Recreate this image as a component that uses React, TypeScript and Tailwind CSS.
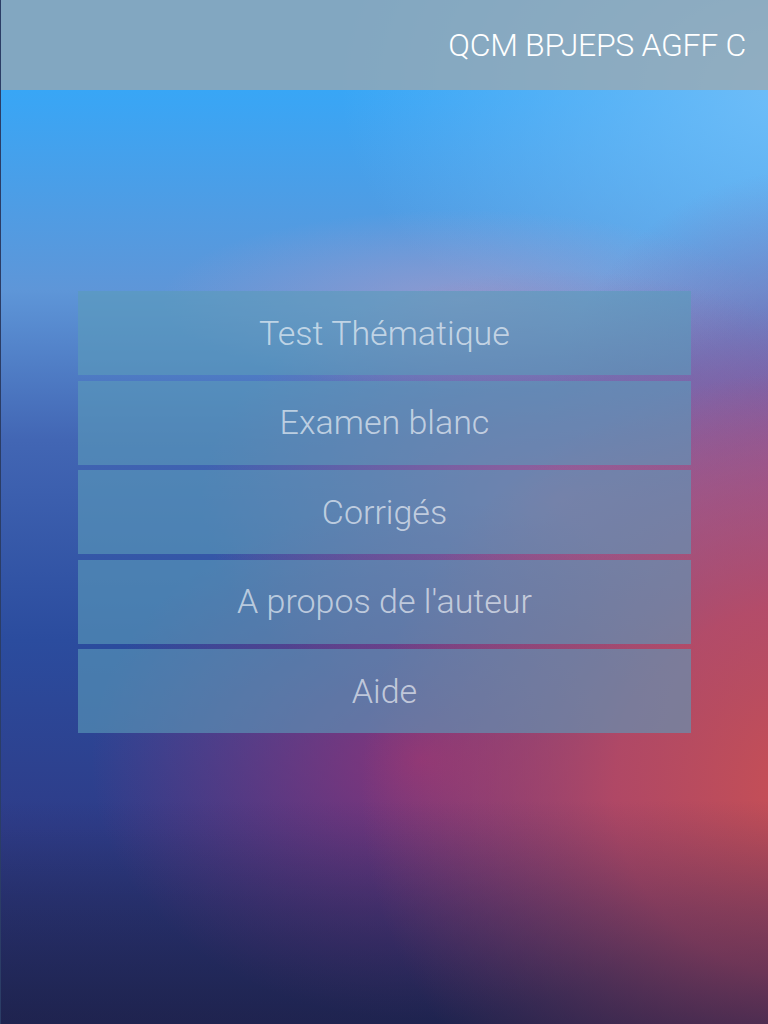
const items = ['Test Thématique', 'Examen blanc', 'Corrigés', "A propos de l'auteur", 'Aide'];

export default function App() {
  return (
    <div
      className="relative min-h-screen w-full border-l border-[#2b3d66] font-['Roboto','Liberation_Sans',sans-serif] bg-[linear-gradient(180deg,rgba(0,0,0,0)_800px,rgba(30,32,76,0.3)_910px,rgba(28,30,70,0.55)_1024px),radial-gradient(ellipse_460px_420px_at_820px_790px,rgba(204,80,82,1)_0%,rgba(192,74,96,0.85)_45%,rgba(180,70,110,0)_100%),radial-gradient(ellipse_330px_260px_at_420px_760px,rgba(150,50,118,0.85)_0%,rgba(140,50,120,0)_100%),radial-gradient(ellipse_360px_230px_at_560px_500px,rgba(176,92,148,0.8)_0%,rgba(176,92,148,0)_100%),radial-gradient(ellipse_260px_300px_at_800px_470px,rgba(134,90,160,0.9)_0%,rgba(134,90,160,0)_100%),radial-gradient(ellipse_300px_90px_at_460px_300px,rgba(168,156,204,0.65)_0%,rgba(168,156,204,0)_100%),radial-gradient(ellipse_460px_300px_at_800px_90px,rgba(112,190,248,1)_0%,rgba(112,190,248,0)_100%),linear-gradient(180deg,#38a6f6_90px,#5e96d8_290px,#4266b4_440px,#2b4c9e_640px,#2e3c88_830px,#222a5a_1024px)]"
    >
      <header className="flex h-[90px] items-center justify-end bg-[rgba(160,167,172,0.72)] pr-[22px]">
        <h1 className="text-[32px] font-light tracking-[-0.3px] text-white">QCM BPJEPS AGFF C</h1>
      </header>

      <main className="flex flex-col px-[77px] pt-[201px]">
        <nav className="flex flex-col gap-[5.5px]">
          {items.map((label) => (
            <button
              key={label}
              className="flex h-[84px] w-full items-center justify-center bg-[rgba(90,155,185,0.62)] text-[34px] font-light text-[rgba(255,255,255,0.62)]"
            >
              {label}
            </button>
          ))}
        </nav>
      </main>
    </div>
  );
}
